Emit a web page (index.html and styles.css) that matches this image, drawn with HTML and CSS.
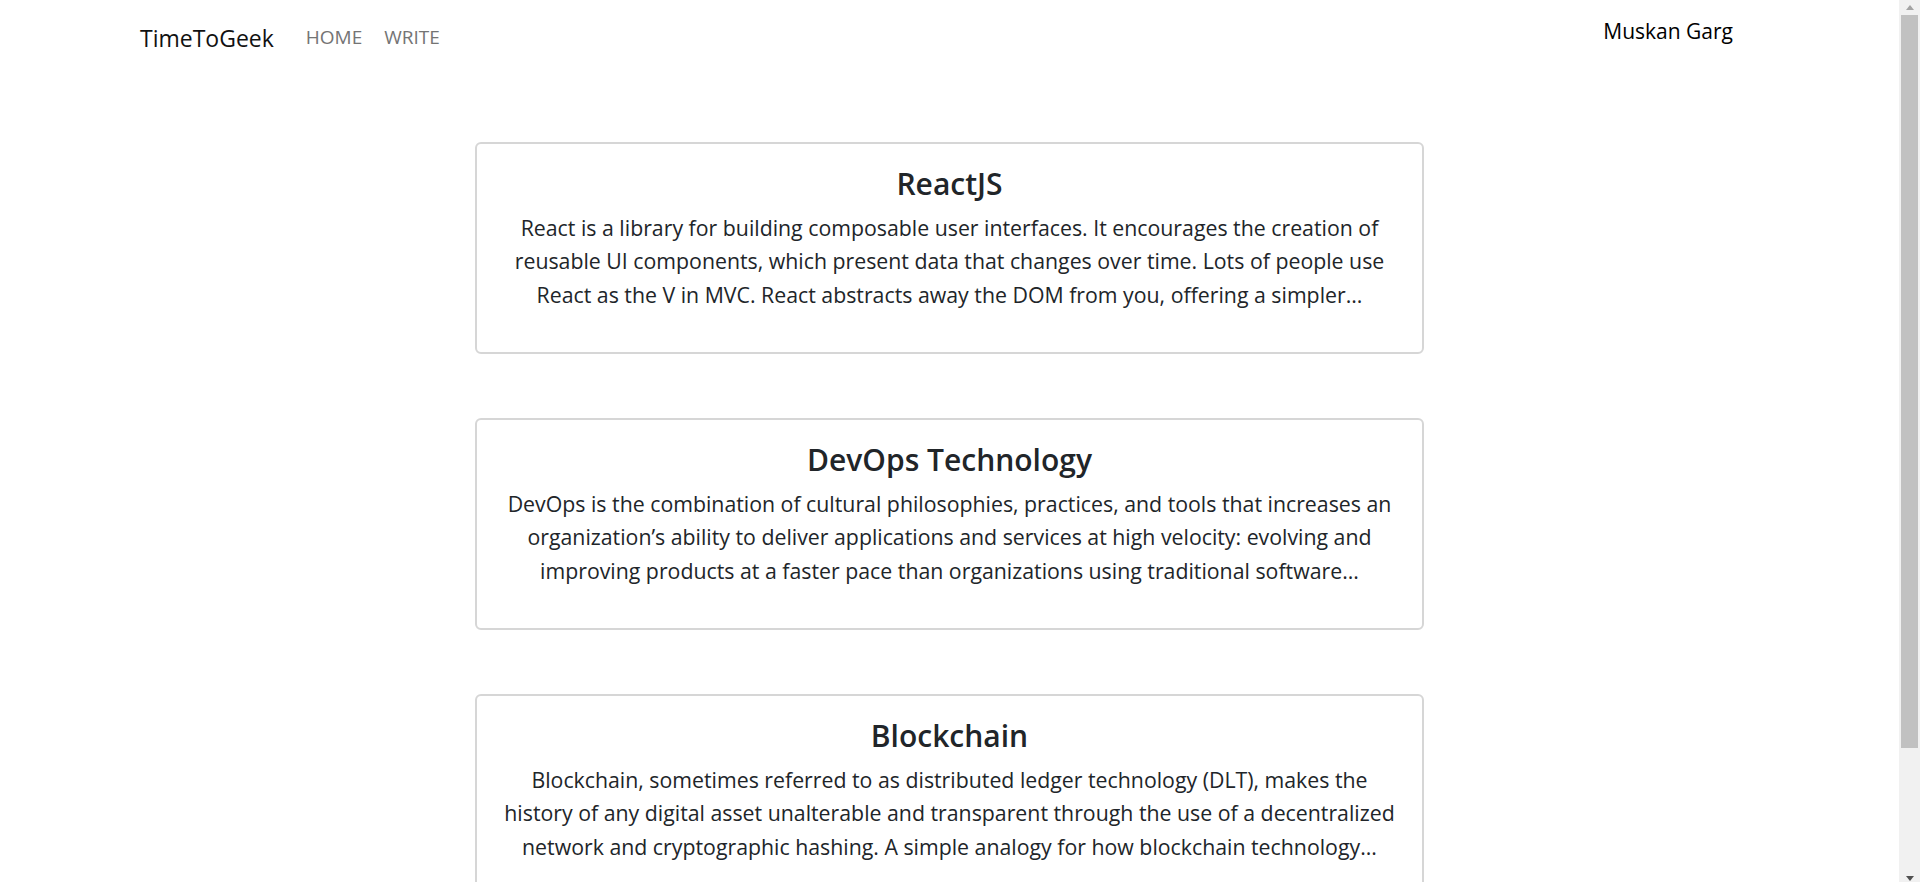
FILE: index.html
```html
<!DOCTYPE html>
<html lang="en">
<head>
<meta charset="utf-8">
<title>TimeToGeek</title>
<link rel="stylesheet" href="styles.css">
</head>
<body>
<div class="app">
  <div class="page">
    <nav class="navbar">
      <a class="brand" href="#">TimeToGeek</a>
      <ul class="nav-links">
        <li><a href="#">HOME</a></li>
        <li><a href="#">WRITE</a></li>
      </ul>
      <div class="user">Muskan Garg</div>
    </nav>
    <main class="posts">
      <article class="card">
        <h3 class="card-title">ReactJS</h3>
        <p class="card-text">React is a library for building composable user interfaces. It encourages the creation of reusable UI components, which present data that changes over time. Lots of people use React as the V in MVC. React abstracts away the DOM from you, offering a simpler...</p>
      </article>
      <article class="card">
        <h3 class="card-title">DevOps Technology</h3>
        <p class="card-text">DevOps is the combination of cultural philosophies, practices, and tools that increases an organization’s ability to deliver applications and services at high velocity: evolving and improving products at a faster pace than organizations using traditional software...</p>
      </article>
      <article class="card">
        <h3 class="card-title">Blockchain</h3>
        <p class="card-text">Blockchain, sometimes referred to as distributed ledger technology (DLT), makes the history of any digital asset unalterable and transparent through the use of a decentralized network and cryptographic hashing. A simple analogy for how blockchain technology...</p>
      </article>
    </main>
  </div>
  <div class="scrollbar">
    <div class="sb-btn sb-up"><span class="arrow-up"></span></div>
    <div class="sb-thumb"></div>
    <div class="sb-track"></div>
    <div class="sb-btn sb-down"><span class="arrow-down"></span></div>
  </div>
</div>
</body>
</html>
```
FILE: styles.css
```css
* { box-sizing: border-box; }
html, body { margin: 0; padding: 0; height: 100%; }
body {
  font-family: "Open Sans", "Noto Sans", sans-serif;
  color: #212529;
  background: #fff;
  overflow: hidden;
}
.app { display: flex; height: 100vh; }
.page { flex: 1; min-width: 0; overflow: hidden; }

.navbar {
  display: flex;
  align-items: flex-start;
  padding: 0 166px 0 140px;
  height: 78px;
}
.brand {
  font-size: 23px;
  line-height: 36px;
  padding-top: 20px;
  color: #111;
  text-decoration: none;
  margin-right: 24px;
}
.nav-links {
  display: flex;
  gap: 6px;
  list-style: none;
  margin: 0;
  padding: 22px 0 0;
}
.nav-links a {
  display: block;
  padding: 0 8px;
  font-size: 19px;
  line-height: 30px;
  color: #747474;
  text-decoration: none;
}
.user {
  margin-left: auto;
  font-size: 21px;
  line-height: 33px;
  padding-top: 15px;
  color: #000;
}

.posts {
  display: flex;
  flex-direction: column;
  align-items: center;
  gap: 64px;
  padding-top: 64px;
}
.card {
  width: 50%;
  height: 212px;
  border: 2px solid #d6d6d6;
  border-radius: 6px;
  padding: 20px 24px 24px;
  text-align: center;
  flex-shrink: 0;
}
.card-title {
  margin: 0;
  font-size: 30px;
  line-height: 40px;
  font-weight: 600;
  color: #212529;
}
.card-text {
  margin: 6.5px 0 16px;
  font-size: 21.3px;
  line-height: 33.5px;
  color: #212529;
}

.scrollbar {
  width: 21px;
  flex-shrink: 0;
  background: #f1f1f1;
  display: flex;
  flex-direction: column;
  padding: 0 2px;
}
.sb-btn {
  height: 15px;
  display: flex;
  align-items: center;
  justify-content: center;
  flex-shrink: 0;
}
.arrow-up {
  width: 0; height: 0;
  border-left: 4.5px solid transparent;
  border-right: 4.5px solid transparent;
  border-bottom: 5px solid #a3a3a3;
}
.arrow-down {
  width: 0; height: 0;
  border-left: 4.5px solid transparent;
  border-right: 4.5px solid transparent;
  border-top: 5px solid #505050;
}
.sb-down { height: 10px; align-items: flex-end; padding-bottom: 1px; }
.sb-thumb { height: 733px; background: #c1c1c1; flex-shrink: 0; }
.sb-track { flex: 1; }
```
